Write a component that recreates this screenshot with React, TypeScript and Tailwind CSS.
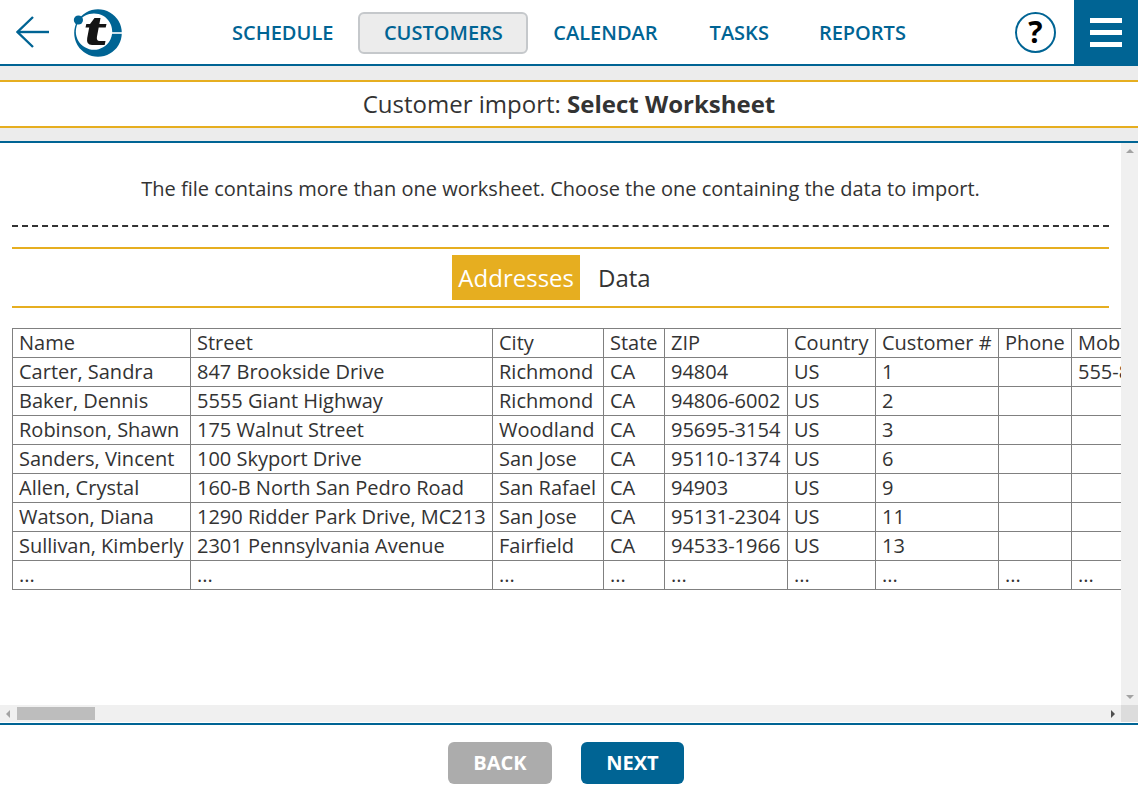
import React from 'react';

const navItems = [
  { label: 'SCHEDULE', cls: 'flex h-[42px] items-center' },
  { label: 'CUSTOMERS', cls: '-mx-[1px] flex h-[42px] items-center rounded-[6px] border-2 border-[#c5c8cb] bg-[#ececec] px-[23.5px]' },
  { label: 'CALENDAR', cls: 'flex h-[42px] items-center' },
  { label: 'TASKS', cls: 'ml-[26px] flex h-[42px] items-center' },
  { label: 'REPORTS', cls: 'ml-[24px] flex h-[42px] items-center' },
];

const columns = [
  { name: 'Name', width: 'w-[178px]' },
  { name: 'Street', width: 'w-[302px]' },
  { name: 'City', width: 'w-[111px]' },
  { name: 'State', width: 'w-[61px]' },
  { name: 'ZIP', width: 'w-[123px]' },
  { name: 'Country', width: 'w-[88px]' },
  { name: 'Customer #', width: 'w-[123px]' },
  { name: 'Phone', width: 'w-[73px]' },
  { name: 'Mobile', width: 'w-[90px]' },
];

const rows = [
  ['Carter, Sandra', '847 Brookside Drive', 'Richmond', 'CA', '94804', 'US', '1', '', '555-888-0101'],
  ['Baker, Dennis', '5555 Giant Highway', 'Richmond', 'CA', '94806-6002', 'US', '2', '', ''],
  ['Robinson, Shawn', '175 Walnut Street', 'Woodland', 'CA', '95695-3154', 'US', '3', '', ''],
  ['Sanders, Vincent', '100 Skyport Drive', 'San Jose', 'CA', '95110-1374', 'US', '6', '', ''],
  ['Allen, Crystal', '160-B North San Pedro Road', 'San Rafael', 'CA', '94903', 'US', '9', '', ''],
  ['Watson, Diana', '1290 Ridder Park Drive, MC213', 'San Jose', 'CA', '95131-2304', 'US', '11', '', ''],
  ['Sullivan, Kimberly', '2301 Pennsylvania Avenue', 'Fairfield', 'CA', '94533-1966', 'US', '13', '', ''],
  ['...', '...', '...', '...', '...', '...', '...', '...', '...'],
];

const Logo = () => (
  <svg width="50" height="50" viewBox="0 0 50 50">
    {/* ring: outer circle minus an offset inner circle */}
    <path
      fillRule="evenodd"
      fill="#006494"
      d="M25 1.2 A23.8 23.8 0 1 1 24.99 1.2 Z M21 5.4 A18.2 18.2 0 1 0 21.01 5.4 Z"
    />
    <rect x="38" y="24.2" width="12" height="1.6" fill="#ffffff" />
    <circle cx="5.4" cy="12" r="4.6" fill="#006494" />
    <path d="M21.5 10 L27.5 10 L26.4 16 L33.5 16 L32.7 19.5 L25.7 19.5 L23.9 29 Q23.4 33 26.5 33 L32.5 33 L31.7 37 L19 37 Q13 37 14.2 30 L16.2 19.5 L12.5 19.5 L13.3 16 L17 16 Z" fill="#141414" />
  </svg>
);

const Row = ({ cells, header }: { cells: string[]; header?: boolean }) => (
  <div className={`flex border-b border-[#808080] ${header ? 'box-content h-[28px] border-t' : 'h-[29px]'}`}>
    {cells.map((cell, i) => (
      <div
        key={i}
        className={`${columns[i].width} shrink-0 overflow-hidden whitespace-nowrap border-l border-[#808080] pl-[6px] leading-[28px]`}
      >
        {cell}
      </div>
    ))}
  </div>
);

export default function App() {
  return (
    <div className="flex h-[794px] w-[1138px] flex-col overflow-hidden bg-white font-['Open_Sans',sans-serif] text-[#333333]">
      {/* top bar */}
      <header className="flex h-[66px] shrink-0 items-center border-b-2 border-[#006494]">
        <div className="ml-[16px] w-[33px]">
          <svg width="33" height="32" viewBox="0 0 33 32" fill="none" stroke="#006494" strokeWidth="2.4">
            <path d="M17 1 L1.5 16 L17 31" />
            <path d="M1.5 16 H33" />
          </svg>
        </div>
        <div className="ml-[24px] mt-[2px] w-[50px]">
          <Logo />
        </div>
        <nav className="ml-[109px] mt-[2px] flex items-center gap-[26px] text-[20px] font-semibold text-[#006494]">
          {navItems.map(item => (
            <div key={item.label} className={item.cls}>
              {item.label}
            </div>
          ))}
        </nav>
        <div className="flex-1" />
        <div className="mr-[18px] flex h-[41px] w-[41px] items-center justify-center rounded-full border-[2px] border-[#006494] text-[30px] font-bold leading-none text-black">
          ?
        </div>
        <div className="flex h-[64px] w-[64px] flex-col items-center justify-center gap-[7px] self-start bg-[#006494] pt-[1px]">
          <div className="h-[5px] w-[32px] bg-white" />
          <div className="h-[5px] w-[32px] bg-white" />
          <div className="h-[5px] w-[32px] bg-white" />
        </div>
      </header>

      {/* title */}
      <div className="h-[14px] shrink-0 bg-[#ececec]" />
      <div className="flex h-[48px] shrink-0 items-center justify-center border-y-2 border-[#e6ae20] text-[24px]">
        <span>
          Customer import: <b>Select Worksheet</b>
        </span>
      </div>
      <div className="h-[13px] shrink-0 bg-[#ececec]" />

      {/* content */}
      <div className="flex min-h-0 flex-1 flex-col border-y-2 border-[#006494]">
        <div className="flex min-h-0 flex-1">
          <main className="min-w-0 flex-1 overflow-hidden">
            <p className="mt-[32px] text-center text-[20px] leading-[28px]">
              The file contains more than one worksheet. Choose the one containing the data to import.
            </p>
            <div className="mx-[12px] mt-[22px] w-[1097px] border-t-2 border-dashed border-[#333333]" />
            <div className="mx-[12px] mt-[20px] flex h-[61px] w-[1097px] items-center justify-center gap-[18px] border-y-2 border-[#e6ae20] text-[24px]">
              <div className="flex h-[45px] items-center bg-[#e6ae20] px-[6px] text-white">Addresses</div>
              <div className="flex h-[45px] items-center pr-[18px]">Data</div>
            </div>
            <div className="ml-[12px] mt-[20px] w-[1150px] text-[20px]">
              <Row cells={columns.map(c => c.name)} header />
              {rows.map(r => (
                <Row key={r[0] + r[1]} cells={r} />
              ))}
            </div>
          </main>
          {/* vertical scrollbar */}
          <div className="flex w-[17px] shrink-0 flex-col items-center justify-between bg-[#f0f0f0] py-[6px]">
            <div className="h-0 w-0 border-x-[4px] border-b-[4px] border-x-transparent border-b-[#a3a3a3]" />
            <div className="h-0 w-0 border-x-[4px] border-t-[4px] border-x-transparent border-t-[#a3a3a3]" />
          </div>
        </div>
        {/* horizontal scrollbar */}
        <div className="mb-[1px] flex h-[17px] shrink-0 items-center bg-[#f0f0f0]">
          <div className="ml-[6px] h-0 w-0 border-y-[4px] border-r-[4px] border-y-transparent border-r-[#a3a3a3]" />
          <div className="ml-[7px] h-[13px] w-[78px] bg-[#bdbdbd]" />
          <div className="ml-auto mr-[6px] h-0 w-0 border-y-[4px] border-l-[4px] border-y-transparent border-l-[#505050]" />
          <div className="h-[17px] w-[17px] bg-[#dcdcdc]" />
        </div>
      </div>

      {/* footer */}
      <footer className="flex h-[69px] shrink-0 items-start justify-center gap-[29px] pr-[6px] pt-[17px] text-[20px] font-bold text-white">
        <div className="flex h-[42px] w-[104px] items-center justify-center rounded-[6px] bg-[#acacac]">BACK</div>
        <div className="flex h-[42px] w-[103px] items-center justify-center rounded-[6px] bg-[#006494]">NEXT</div>
      </footer>
    </div>
  );
}
